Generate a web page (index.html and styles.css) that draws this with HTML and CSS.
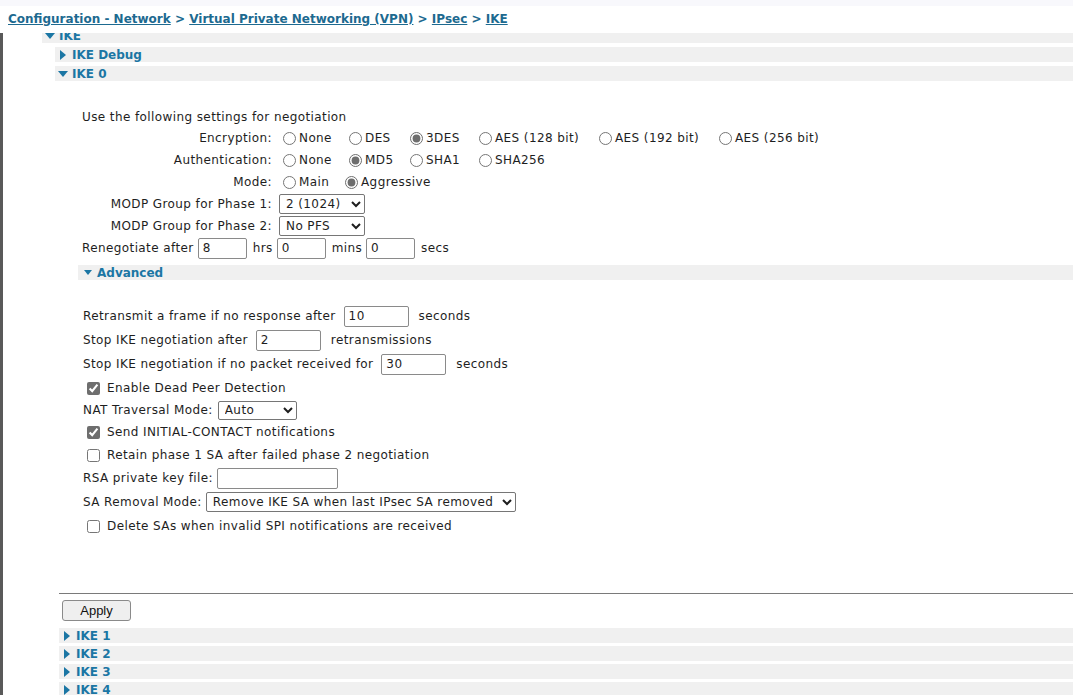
FILE: index.html
```html
<!DOCTYPE html>
<html>
<head>
<meta charset="utf-8">
<link rel="stylesheet" href="styles.css">
</head>
<body>
<header class="crumbs">
  <div class="strip"></div>
  <nav class="crumb-line"><a href="#">Configuration - Network</a> &gt; <a href="#">Virtual Private Networking (VPN)</a> &gt; <a href="#">IPsec</a> &gt; <a href="#">IKE</a></nav>
</header>
<main class="frame">
  <div class="tree">
    <div class="node-row"><span class="tri down"></span>IKE</div>
    <div class="children">
      <div class="node-row"><span class="tri right"></span>IKE Debug</div>
      <div class="node-row"><span class="tri down"></span>IKE 0</div>
      <div class="panel">
        <p class="intro">Use the following settings for negotiation</p>
        <div class="grid">
          <div class="lbl">Encryption:</div>
          <div class="opts wide">
            <label class="opt"><input type="radio" name="enc">None</label>
            <label class="opt"><input type="radio" name="enc">DES</label>
            <label class="opt"><input type="radio" name="enc" checked>3DES</label>
            <label class="opt"><input type="radio" name="enc">AES (128 bit)</label>
            <label class="opt"><input type="radio" name="enc">AES (192 bit)</label>
            <label class="opt"><input type="radio" name="enc">AES (256 bit)</label>
          </div>
          <div class="lbl">Authentication:</div>
          <div class="opts wide">
            <label class="opt"><input type="radio" name="auth">None</label>
            <label class="opt"><input type="radio" name="auth" checked>MD5</label>
            <label class="opt"><input type="radio" name="auth">SHA1</label>
            <label class="opt"><input type="radio" name="auth">SHA256</label>
          </div>
          <div class="lbl">Mode:</div>
          <div class="opts mode">
            <label class="opt"><input type="radio" name="mode">Main</label>
            <label class="opt"><input type="radio" name="mode" checked>Aggressive</label>
          </div>
          <div class="lbl">MODP Group for Phase 1:</div>
          <div class="val"><select class="sel-modp"><option>2 (1024)</option></select></div>
          <div class="lbl">MODP Group for Phase 2:</div>
          <div class="val"><select class="sel-modp"><option>No PFS</option></select></div>
          <div class="reneg">Renegotiate after <input class="txt short" type="text" value="8"> hrs <input class="txt short" type="text" value="0"> mins <input class="txt short" type="text" value="0"> secs</div>
        </div>
        <div class="node-row adv"><span class="tri down small"></span>Advanced</div>
        <div class="adv-body">
          <div class="arow">Retransmit a frame if no response after <input class="txt med" type="text" value="10"> <span class="unit">seconds</span></div>
          <div class="arow">Stop IKE negotiation after <input class="txt med" type="text" value="2"> <span class="unit">retransmissions</span></div>
          <div class="arow">Stop IKE negotiation if no packet received for <input class="txt med" type="text" value="30"> <span class="unit">seconds</span></div>
          <label class="arow cb"><input type="checkbox" checked>Enable Dead Peer Detection</label>
          <div class="arow short">NAT Traversal Mode: <select class="sel-nat"><option>Auto</option></select></div>
          <label class="arow cb"><input type="checkbox" checked>Send INITIAL-CONTACT notifications</label>
          <label class="arow cb mid"><input type="checkbox">Retain phase 1 SA after failed phase 2 negotiation</label>
          <div class="arow">RSA private key file: <input class="txt key" type="text" value=""></div>
          <div class="arow">SA Removal Mode: <select class="sel-sa"><option>Remove IKE SA when last IPsec SA removed</option></select></div>
          <label class="arow cb"><input type="checkbox">Delete SAs when invalid SPI notifications are received</label>
        </div>
      </div>
      <div class="footer">
        <hr class="rule">
        <button class="apply" type="button">Apply</button>
        <div class="node-row"><span class="tri right"></span>IKE 1</div>
        <div class="node-row"><span class="tri right"></span>IKE 2</div>
        <div class="node-row"><span class="tri right"></span>IKE 3</div>
        <div class="node-row"><span class="tri right"></span>IKE 4</div>
      </div>
    </div>
  </div>
</main>
</body>
</html>
```

FILE: styles.css
```css
html, body {
  margin: 0;
  padding: 0;
  background: #fff;
  overflow: hidden;
  height: 695px;
}
body {
  font-family: "DejaVu Sans", Verdana, sans-serif;
  font-size: 12px;
  letter-spacing: 0.4px;
  color: #1e1e1e;
}

.crumbs {
  position: absolute;
  top: 0;
  left: 0;
  right: 0;
  height: 33px;
  background: #fff;
  z-index: 2;
}
.strip {
  height: 6px;
  background: #f8f8fc;
}
.crumb-line {
  padding: 5px 0 0 8px;
  line-height: 16px;
  font-weight: bold;
  font-size: 12px;
  letter-spacing: 0;
  color: #1d6a90;
  white-space: nowrap;
}
.crumb-line a {
  color: #1d6a90;
  text-decoration: underline;
}

.frame {
  margin-top: 24px;
  padding-top: 4px;
  border-left: 3px solid #595959;
  min-height: 700px;
}
.tree {
  margin-left: 39px;
}
.children {
  margin-left: 13px;
}

.node-row {
  display: flex;
  align-items: center;
  height: 15px;
  margin-top: 4px;
  background: #f0f0f0;
  font-weight: bold;
  font-size: 12px;
  letter-spacing: 0;
  color: #1b76a4;
  white-space: nowrap;
}
.tree > .node-row:first-child {
  margin-top: 0;
}
.tri {
  display: inline-block;
  width: 0;
  height: 0;
}
.tri.right {
  margin: 0 6px 0 5px;
  border-left: 6px solid #1b76a4;
  border-top: 5px solid transparent;
  border-bottom: 5px solid transparent;
}
.tri.down {
  margin: 0 4px 0 3px;
  border-top: 6px solid #1b76a4;
  border-left: 5px solid transparent;
  border-right: 5px solid transparent;
}
.tri.down.small {
  margin: 0 5px 0 6px;
  border-top: 5px solid #1b76a4;
  border-left: 4px solid transparent;
  border-right: 4px solid transparent;
}

.panel {
  padding: 28px 0 0 27px;
}
.intro {
  margin: 0;
  line-height: 16px;
  height: 18px;
}

.grid {
  display: grid;
  grid-template-columns: 194px auto;
  grid-auto-rows: 22px;
  align-items: center;
}
.lbl {
  text-align: right;
  padding-right: 4px;
  white-space: nowrap;
}
.opts {
  display: grid;
  align-items: center;
  white-space: nowrap;
  padding-left: 7px;
}
.opts.wide {
  grid-template-columns: 66px 61px 69px 120px 120px auto;
}
.opts.mode {
  grid-template-columns: 62px auto;
}
.opt {
  display: flex;
  align-items: center;
}
.opt input {
  margin: 0 3px 0 0;
  width: 13px;
  height: 13px;
  accent-color: #6e6e6e;
}
.val {
  display: flex;
  align-items: center;
}
.sel-modp {
  margin-left: 3px;
  width: 86px;
  height: 20px;
}
select {
  font-family: "DejaVu Sans", Verdana, sans-serif;
  font-size: 12px;
  letter-spacing: 0.4px;
  color: #1e1e1e;
  background: #fff;
  border: 1px solid #767676;
  border-radius: 2px;
  padding: 0 0 0 2px;
}
.reneg {
  grid-column: 1 / -1;
  display: flex;
  align-items: center;
  gap: 4px;
  height: 28px;
  white-space: nowrap;
}
.reneg .txt {
  margin-right: 2px;
}
.txt {
  box-sizing: border-box;
  font-family: "DejaVu Sans", Verdana, sans-serif;
  font-size: 12px;
  letter-spacing: 0.4px;
  color: #1e1e1e;
  border: 1px solid #8a8a8a;
  border-radius: 2px;
  padding: 0 4px;
  margin: 0;
  background: #fff;
}
.txt.short {
  width: 49px;
  height: 21px;
}
.txt.med {
  width: 65px;
  height: 21px;
  margin: 0 6px 0 8px;
}
.txt.key {
  width: 121px;
  height: 21px;
  margin-left: 4px;
}

.adv {
  margin: 6px 0 0 -4px;
}
.adv-body {
  padding: 24px 0 0 1px;
}
.arow {
  display: flex;
  align-items: center;
  height: 24px;
  white-space: nowrap;
}
.arow.short {
  height: 20px;
}
.arow.mid {
  height: 22px;
}
.unit {
  margin-left: 4px;
}
.cb input {
  margin: 0 7px 0 4px;
  width: 13px;
  height: 13px;
  accent-color: #6e6e6e;
}
.sel-nat {
  margin-left: 5px;
  width: 79px;
  height: 19px;
}
.sel-sa {
  margin-left: 4px;
  width: 310px;
  height: 20px;
}

.footer {
  margin: 55px 0 0 4px;
}
.rule {
  margin: 0;
  border: 0;
  border-top: 1px solid #7a7a7a;
}
.apply {
  display: block;
  margin: 6px 0 7px 3px;
  width: 69px;
  height: 21px;
  font-family: "Liberation Sans", Arial, sans-serif;
  font-size: 13px;
  letter-spacing: 0;
  color: #111;
  background: #efefef;
  border: 1px solid #8a8a8a;
  border-radius: 3px;
  padding: 0;
}
.footer .node-row {
  margin-top: 3px;
}
```
